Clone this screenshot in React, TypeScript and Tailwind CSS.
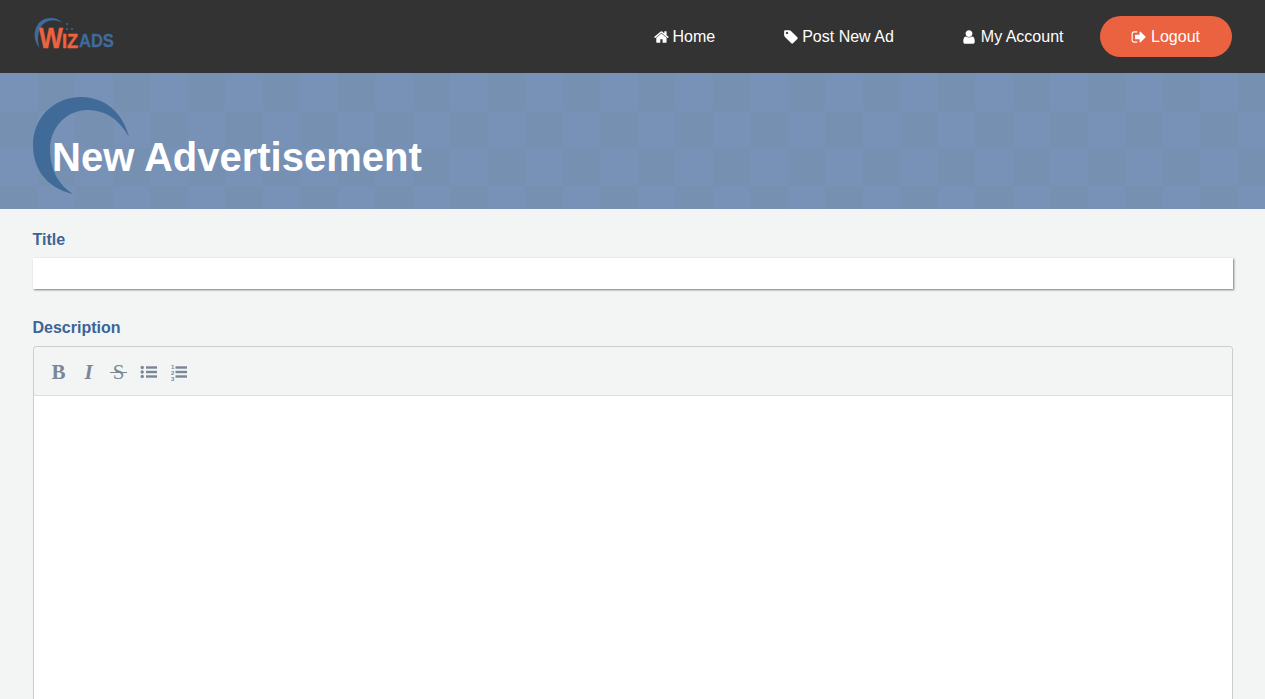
import type { ReactNode } from 'react'

const FA = {
  home: 'M1408 992v480q0 26-19 45t-45 19h-384v-384h-256v384h-384q-26 0-45-19t-19-45v-480q0-1 .5-3t.5-3l575-474 575 474q1 2 1 6zm223-69l-62 74q-8 9-21 11h-3q-13 0-21-7l-692-577-692 577q-12 8-24 7-13-2-21-11l-62-74q-8-10-7-23.5t11-21.5l719-599q32-26 76-26t76 26l244 204v-195q0-14 9-23t23-9h192q14 0 23 9t9 23v408l219 182q10 8 11 21.5t-7 23.5z',
  tag: 'M576 448q0-53-37.5-90.5t-90.5-37.5-90.5 37.5-37.5 90.5 37.5 90.5 90.5 37.5 90.5-37.5 37.5-90.5zm1067 576q0 53-37 90l-491 492q-39 37-91 37-53 0-90-37l-715-716q-38-37-64.5-101t-26.5-117v-416q0-52 38-90t90-38h416q53 0 117 26.5t102 64.5l715 714q37 39 37 91z',
  user: 'M1536 1399q0 109-62.5 187t-150.5 78h-854q-88 0-150.5-78t-62.5-187q0-85 8.5-160.5t31.5-152 58.5-131 94-89 134.5-34.5q131 128 313 128t313-128q76 0 134.5 34.5t94 89 58.5 131 31.5 152 8.5 160.5zm-256-887q0 159-112.5 271.5t-271.5 112.5-271.5-112.5-112.5-271.5 112.5-271.5 271.5-112.5 271.5 112.5 112.5 271.5z',
  signOut: 'M704 1440q0 4 1 20t.5 26.5-3 23.5-10 19.5-20.5 6.5h-320q-119 0-203.5-84.5t-84.5-203.5v-704q0-119 84.5-203.5t203.5-84.5h320q13 0 22.5 9.5t9.5 22.5q0 4 1 20t.5 26.5-3 23.5-10 19.5-20.5 6.5h-320q-66 0-113 47t-47 113v704q0 66 47 113t113 47h312l11.5 1 11.5 3 8 5.5 7 9 2 13.5zm928-544q0 26-19 45l-544 544q-19 19-45 19t-45-19-19-45v-288h-448q-26 0-45-19t-19-45v-384q0-26 19-45t45-19h448v-288q0-26 19-45t45-19 45 19l544 544q19 19 19 45z',
}

function FaIcon({ d }: { d: string }) {
  return (
    <svg viewBox="0 0 1792 1792" className="h-[16px] w-[16px] fill-white">
      <path d={d} />
    </svg>
  )
}

function NavLink({ icon, className, children }: { icon: string; className: string; children: ReactNode }) {
  return (
    <a className={`flex items-center text-[16px] text-white ${className}`}>
      <FaIcon d={icon} />
      {children}
    </a>
  )
}

function Logo() {
  return (
    <div className="relative mb-[4px] h-[36px] w-[84px]">
      <svg viewBox="0 0 84 36" className="absolute inset-0 h-full w-full">
        <path d="M6.5 31 C-3 20 2 1.5 17 1 C22.5 .8 26.5 2.5 29.5 6 C25 3.2 20 2.6 15.5 4 C7 6.5 2.5 18 6.5 31 Z" fill="#3f6b9c" />
        <circle cx="34" cy="7" r="1" fill="#3f6b9c" />
        <circle cx="39" cy="12" r="1" fill="#3f6b9c" />
        <circle cx="34" cy="12" r="1" fill="#3f6b9c" />
      </svg>
      <div className="absolute left-[6px] top-[6px] flex items-baseline font-bold leading-[30px]">
        <span className="mr-[-3.6px] origin-left scale-x-[0.87] text-[29px] text-[#ee6240] [-webkit-text-stroke:0.4px_#ee6240]">W</span>
        <span className="mr-[-2.4px] origin-left scale-x-[0.87] text-[21px] text-[#ee6240] [-webkit-text-stroke:0.4px_#ee6240]">IZ</span>
        <span className="origin-left -translate-y-px scale-x-[0.87] text-[19px] text-[#3f6b9c] [-webkit-text-stroke:0.3px_#3f6b9c]">ADS</span>
      </div>
    </div>
  )
}

function ToolGlyph({ className, children }: { className: string; children: ReactNode }) {
  return (
    <span className={`relative flex h-[20px] w-[30px] items-center justify-center font-['Liberation_Serif',serif] text-[21px] leading-none text-[#7a8794] ${className}`}>
      {children}
    </span>
  )
}

function BulletIcon() {
  return (
    <svg viewBox="0 0 18 14" className="h-[14px] w-[18px] fill-[#7a8794]">
      <circle cx="2.2" cy="2.5" r="1.7" />
      <circle cx="2.2" cy="7" r="1.7" />
      <circle cx="2.2" cy="11.5" r="1.7" />
      <rect x="6" y="1.3" width="11" height="2.4" />
      <rect x="6" y="5.8" width="11" height="2.4" />
      <rect x="6" y="10.3" width="11" height="2.4" />
    </svg>
  )
}

function NumberIcon() {
  return (
    <svg viewBox="0 0 18 18" className="h-[18px] w-[18px] fill-[#7a8794] font-['Liberation_Sans',sans-serif] font-bold">
      <text x="1" y="5.5" fontSize="6">1</text>
      <text x="1" y="11.5" fontSize="6">2</text>
      <text x="1" y="17.5" fontSize="6">3</text>
      <rect x="5.5" y="3.3" width="11.5" height="2.4" />
      <rect x="5.5" y="7.8" width="11.5" height="2.4" />
      <rect x="5.5" y="12.3" width="11.5" height="2.4" />
    </svg>
  )
}

// low contrast checker behind the page title
function HeroPattern() {
  const cols = Array.from({ length: 34 })
  const rows = Array.from({ length: 4 })
  return (
    <div className="absolute inset-0 grid grid-cols-[repeat(34,37.5px)] grid-rows-[repeat(4,37.5px)]">
      {rows.map((_, r) =>
        cols.map((_, c) => (
          <div key={`${r}-${c}`} className={(r + c) % 2 === 0 ? 'bg-[#7891b7]' : 'bg-[#7690b1]'} />
        )),
      )}
    </div>
  )
}

export default function App() {
  return (
    <div className="min-h-[699px] bg-[#f3f5f4] font-['Liberation_Sans',sans-serif]">
      <header className="bg-[#333333]">
        <div className="mx-auto flex h-[73px] w-[1200px] items-center justify-between">
          <Logo />
          <nav className="mr-[1px] flex items-center">
            <NavLink icon={FA.home} className="gap-[3px] pl-[34px] pr-[34px]">Home</NavLink>
            <NavLink icon={FA.tag} className="gap-[3px] pl-[34px] pr-[34px]">Post New Ad</NavLink>
            <NavLink icon={FA.user} className="gap-[4px] pl-[33px] pr-[36px]">My Account</NavLink>
            <a className="flex h-[41px] w-[132px] items-center justify-center gap-[4px] rounded-full bg-[#ea6240] text-[16px] text-white">
              <FaIcon d={FA.signOut} />
              Logout
            </a>
          </nav>
        </div>
      </header>

      <section className="relative h-[136px] overflow-hidden">
        <HeroPattern />
        <svg viewBox="0 0 97 97" className="absolute left-[33px] top-[24px] h-[97px] w-[97px]">
          <path d="M40 97 C10 90 0 68 0 48 C0 20 22 0 48 0 C72 0 90 16 96 40 C86 22 72 13 55 13 C34 13 17 30 17 52 C17 72 25 88 40 97 Z" fill="#406a98" />
        </svg>
        <h1 className="absolute left-[52px] top-[60px] text-[40px] leading-[48px] font-bold text-white">
          New Advertisement
        </h1>
      </section>

      <main className="mx-auto w-[1200px] pt-[21px]">
        <label className="block text-[16px] leading-[20px] font-bold text-[#3c6497]">Title</label>
        <input className="mt-[8px] block h-[31px] w-full bg-white shadow-[1px_1px_2px_#6f7f7a] outline-none" />

        <label className="mt-[29px] block text-[16px] leading-[20px] font-bold text-[#3c6497]">Description</label>
        <div className="mt-[8px] overflow-hidden rounded-t-[4px] border border-b-0 border-[#cccccc]">
          <div className="flex h-[49px] items-center border-b border-[#dcdcdc] bg-[#f3f5f4] pl-[10px] pt-[2px]">
            <ToolGlyph className="font-bold">B</ToolGlyph>
            <ToolGlyph className="font-bold italic">I</ToolGlyph>
            <ToolGlyph className="">
              S
              <span className="absolute left-[6px] right-[7px] top-[10px] h-[1px] bg-[#7a8794]" />
            </ToolGlyph>
            <span className="flex w-[30px] justify-center"><BulletIcon /></span>
            <span className="flex w-[30px] justify-center"><NumberIcon /></span>
          </div>
          <div className="h-[304px] bg-white" />
        </div>
      </main>
    </div>
  )
}
